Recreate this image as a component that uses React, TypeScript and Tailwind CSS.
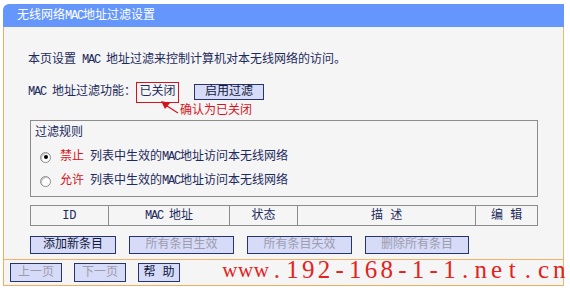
import React from "react";

const ink = "text-[#1c2a5c]";

// latin runs are narrower in the original bitmap font
function M({ children }: { children: React.ReactNode }) {
  return <span className="tracking-[-1.2px]">{children}</span>;
}

function Btn({ label, w, dim, h = "h-[18px]" }: { label: string; w: string; dim?: boolean; h?: string }) {
  return (
    <div
      className={`${w} ${h} flex items-center justify-center border border-[#27346e] bg-[#d6dbf8] text-[12px] ${
        dim ? "text-[#9c9cae]" : "text-[#10183a]"
      }`}
    >
      {label}
    </div>
  );
}

function Radio({ checked }: { checked?: boolean }) {
  return (
    <div className="w-[11px] h-[11px] rounded-full border border-[#8a8a8a] bg-white flex items-center justify-center shadow-[inset_1px_1px_1px_#c0c0c0]">
      {checked && <div className="w-[4px] h-[4px] rounded-full bg-black" />}
    </div>
  );
}

export default function App() {
  const cols = [
    { t: <span>ID</span>, w: "w-[78px]", k: "id" },
    { t: <span><M>MAC </M>地址</span>, w: "w-[122px]", k: "mac" },
    { t: <span>状态</span>, w: "w-[68px]", k: "st" },
    { t: <span>描 述</span>, w: "w-[179px]", k: "ds" },
    { t: <span>编 辑</span>, w: "w-[61px]", k: "ed" },
  ];

  const mark = "www.192-168-1-1.net.cn".split("");

  return (
    <div className="relative w-[570px] h-[291px] bg-white overflow-hidden font-['Liberation_Mono','Noto_Sans_CJK_SC',monospace] text-[12px]">
      <div className="ml-[3px] mt-[4px] w-[561px]">
        {/* title bar */}
        <div className="h-[23px] bg-[#6496fc] rounded-tl-[6px] pl-[14px] flex items-center text-white text-[12px]">
          无线网络<M>MAC</M>地址过滤设置
        </div>

        {/* body */}
        <div className="bg-[#f5f5f5] border-l border-l-[#f0ad5c] border-r border-r-[#d9c070] border-b border-b-[#f3b46a] pl-[24px] pt-[25px] pb-[5px]">
          <div className={`h-[16px] leading-[16px] ${ink}`}>
            本页设置<M> MAC </M>地址过滤来控制计算机对本无线网络的访问。
          </div>

          <div className={`mt-[13px] h-[22px] flex items-center ${ink}`}>
            <span>
              <M>MAC </M>地址过滤功能：
            </span>
            <div className="h-[21px] w-[43px] border border-[#d4141c] flex items-center justify-center">已关闭</div>
            <div className="ml-[15px]">
              <Btn label="启用过滤" w="w-[70px]" h="h-[16px]" />
            </div>
          </div>

          <div className="h-[17px] leading-[17px] pl-[152px] text-[#d4141c]">确认为已关闭</div>

          {/* filter rules */}
          <div className={`ml-[2px] w-[508px] h-[77px] border border-[#8c8c8c] ${ink}`}>
            <div className="h-[24px] leading-[24px] pl-[4px]">过滤规则</div>
            <div className="h-[24px] flex items-center pl-[9px]">
              <Radio checked />
              <span className="ml-[9px] text-[#d4141c]">禁止</span>
              <span className="ml-[6px]">
                列表中生效的<M>MAC</M>地址访问本无线网络
              </span>
            </div>
            <div className="h-[24px] flex items-center pl-[9px]">
              <Radio />
              <span className="ml-[9px] text-[#d4141c]">允许</span>
              <span className="ml-[6px]">
                列表中生效的<M>MAC</M>地址访问本无线网络
              </span>
            </div>
          </div>

          {/* table header */}
          <div className={`ml-[2px] mt-[8px] w-[508px] h-[21px] flex border border-[#8c8c8c] ${ink}`}>
            {cols.map((c, i) => (
              <div
                key={c.k}
                className={`${c.w} flex items-center justify-center ${i < cols.length - 1 ? "border-r border-[#8c8c8c]" : ""}`}
              >
                {c.t}
              </div>
            ))}
          </div>

          {/* actions */}
          <div className="ml-[2px] mt-[10px] flex gap-[13px]">
            <Btn label="添加新条目" w="w-[86px]" />
            <Btn label="所有条目生效" w="w-[105px]" dim />
            <Btn label="所有条目失效" w="w-[105px]" dim />
            <Btn label="删除所有条目" w="w-[104px]" dim />
          </div>
        </div>

        {/* footer */}
        <div className="bg-[#f5f5f5] border-l border-l-[#f0ad5c] border-r border-r-[#d9c070] border-b border-b-[#f0ad5c] pl-[6px] pt-[3px] pb-[3px] flex gap-[12px]">
          <Btn label="上一页" w="w-[52px]" h="h-[19px]" dim />
          <Btn label="下一页" w="w-[52px]" h="h-[19px]" dim />
          <Btn label="帮 助" w="w-[42px]" h="h-[19px]" />
        </div>
      </div>

      {/* callout arrow */}
      <svg className="absolute left-[150px] top-[94px]" width="35" height="25" viewBox="0 0 35 25">
        <polygon points="11,7 20,9 15,15" fill="#d4141c" />
        <line x1="17" y1="12" x2="28" y2="19" stroke="#d4141c" strokeWidth="1.2" />
      </svg>

      {/* watermark */}
      <div className="absolute left-[222px] top-[256px] h-[28px] leading-[28px] text-[25px] text-[#e2231c] font-['Liberation_Serif',serif] whitespace-nowrap flex">
        {mark.map((ch, i) => (
          <span key={i} className={`inline-block w-[15.7px] text-center ${ch === "w" ? "text-[21px]" : ""}`}>
            {ch}
          </span>
        ))}
      </div>
    </div>
  );
}
